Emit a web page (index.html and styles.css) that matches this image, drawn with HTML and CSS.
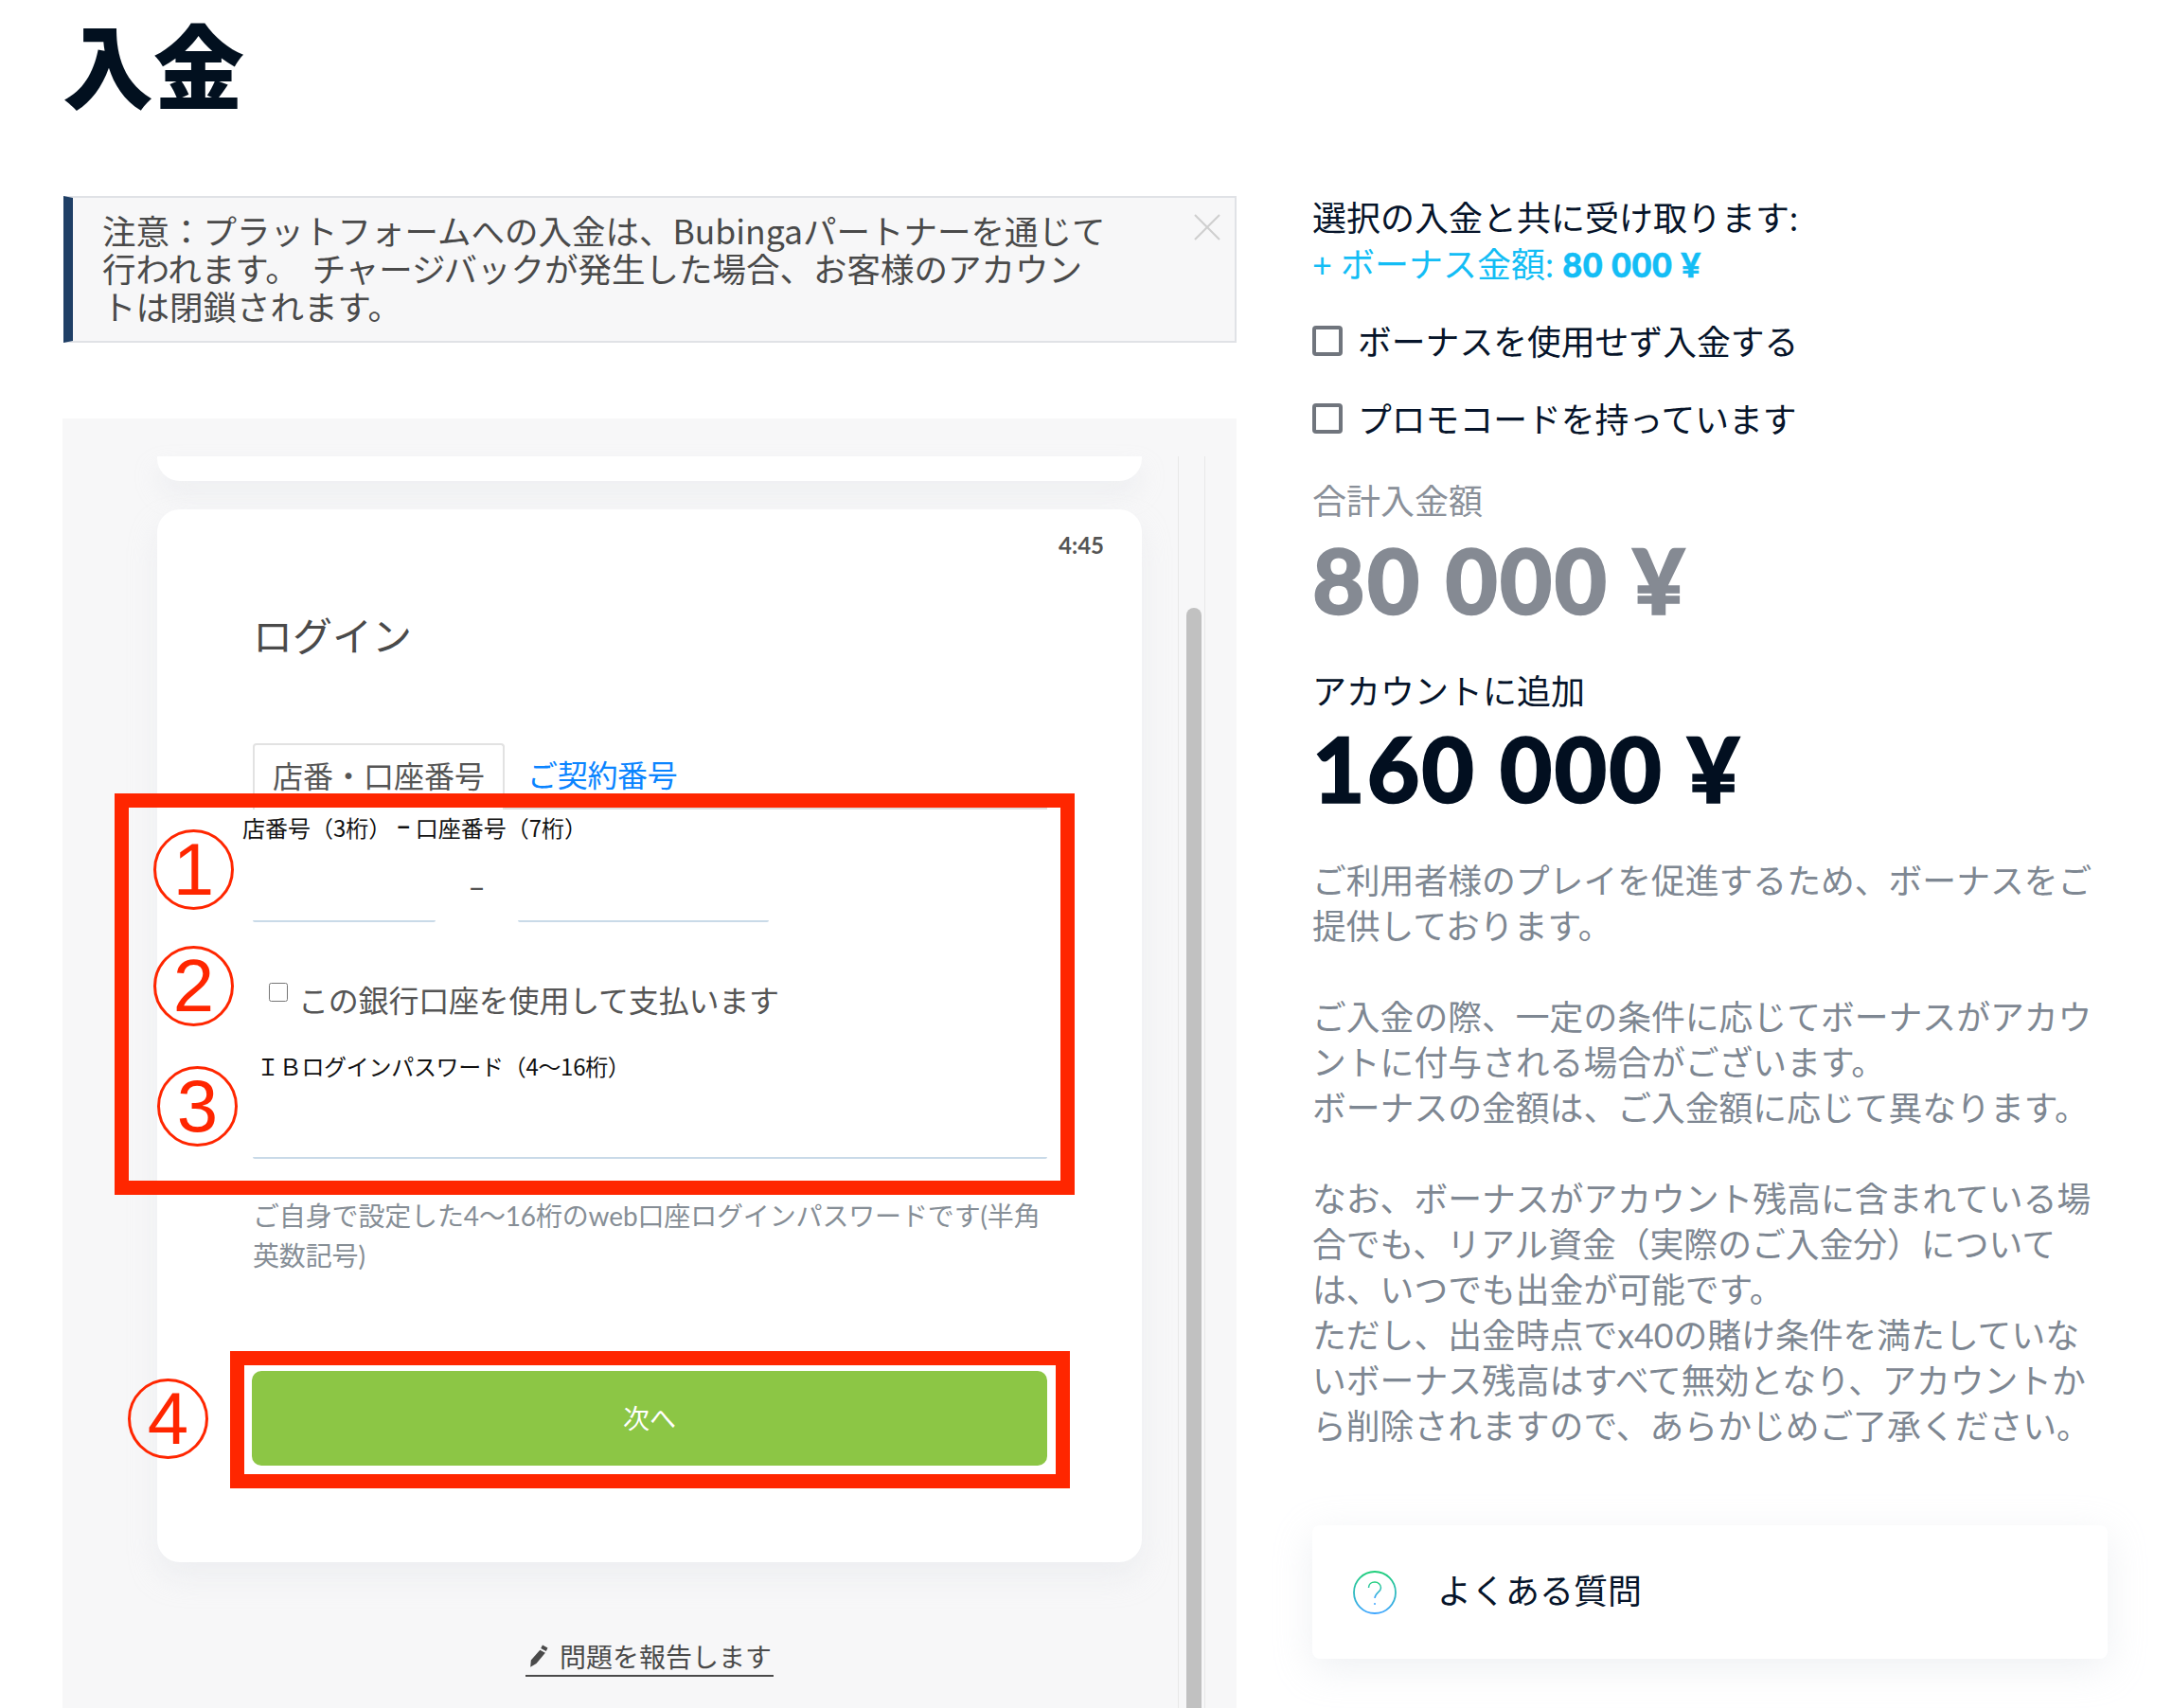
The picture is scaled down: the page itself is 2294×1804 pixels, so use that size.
FILE: index.html
```html
<!DOCTYPE html>
<html lang="ja">
<head>
<meta charset="utf-8">
<title>入金</title>
<link rel="stylesheet" href="styles.css">
</head>
<body>
<div class="page">
  <h1 class="title">入金</h1>
  <div class="columns">
    <main class="left">
      <div class="alert">
        <p class="alert-text">注意&#xFF1A;プラットフォームへの入金は、Bubingaパートナーを通じて行われます。 チャージバックが発生した場合、お客様のアカウントは閉鎖されます。</p>
        <svg class="alert-close" width="28" height="28" viewBox="0 0 28 28"><path d="M1 1L27 27M27 1L1 27" fill="none" stroke="#cfcfcf" stroke-width="2"/></svg>
      </div>
      <div class="panel">
        <div class="frame">
          <div class="scroll">
            <div class="card-stub"></div>
            <div class="card">
              <div class="time">4:45</div>
              <h2 class="login">ログイン</h2>
              <div class="tabs">
                <span class="tab tab-active">店番・口座番号</span>
                <a class="tab tab-link">ご契約番号</a>
              </div>
              <div class="field-label field-label-a">店番号&#xFF08;3桁&#xFF09;<b class="dash">ー</b> 口座番号&#xFF08;7桁&#xFF09;</div>
              <div class="inputs">
                <span class="line line-a"></span>
                <span class="sep">–</span>
                <span class="line line-b"></span>
              </div>
              <label class="remember"><input class="remember-box" type="checkbox"><span>この銀行口座を使用して支払います</span></label>
              <div class="field-label field-label-b">&#xFF29;&#xFF22;ログインパスワード&#xFF08;4〜16桁&#xFF09;</div>
              <span class="line line-full"></span>
              <p class="help">ご自身で設定した4〜16桁のweb口座ログインパスワードです(半角英数記号)</p>
              <button class="next">次へ</button>

              <div class="mark mark-box-1"></div>
              <div class="mark mark-box-2"></div>
              <div class="num num-1">1</div>
              <div class="num num-2">2</div>
              <div class="num num-3">3</div>
              <div class="num num-4">4</div>
            </div>
            <div class="report-wrap">
              <a class="report">
                <svg class="pencil" width="22" height="26" viewBox="0 0 22 26"><path d="M15 1.500L20.500 4.500 18.800 8 13.200 5ZM12.300 6.800L17.900 9.800 8.500 21 2.200 24.800 2.800 17.500Z" fill="#4a4a4a"/></svg>
                問題を報告します
              </a>
            </div>
          </div>
          <div class="scrollbar"><div class="thumb"></div></div>
        </div>
      </div>
    </main>
    <aside class="right">
      <div class="receive">選択の入金と共に受け取ります:</div>
      <div class="bonus">+ ボーナス金額: <b>80 000 ¥</b></div>
      <div class="opt opt-first"><span class="box"></span><span>ボーナスを使用せず入金する</span></div>
      <div class="opt"><span class="box"></span><span>プロモコードを持っています</span></div>
      <div class="sum-label">合計入金額</div>
      <div class="sum sum-grey">80 000 ¥</div>
      <div class="add-label">アカウントに追加</div>
      <div class="sum sum-dark">160 000 ¥</div>
      <div class="desc">
        <p>ご利用者様のプレイを促進するため、ボーナスをご提供しております。</p>
        <p>ご入金の際、一定の条件に応じてボーナスがアカウントに付与される場合がございます。<br>ボーナスの金額は、ご入金額に応じて異なります。</p>
        <p>なお、ボーナスがアカウント残高に含まれている場合でも、リアル資金&#xFF08;実際のご入金分&#xFF09;については、いつでも出金が可能です。<br>ただし、出金時点でx40の賭け条件を満たしていないボーナス残高はすべて無効となり、アカウントから削除されますので、あらかじめご了承ください。</p>
      </div>
      <div class="faq">
        <svg class="faq-icon" width="46" height="46" viewBox="0 0 46 46">
          <defs><linearGradient id="faqg" x1="0" y1="0" x2="0" y2="1"><stop offset="0" stop-color="#1fcf7a"/><stop offset="1" stop-color="#3fa6ff"/></linearGradient></defs>
          <circle cx="23" cy="23" r="22" fill="none" stroke="url(#faqg)" stroke-width="1.800"/>
          <path d="M16.500 18C16.500 14 19.500 12 23 12S29.500 14.500 29.500 18C29.500 22.500 23 23.500 23 29" fill="none" stroke="url(#faqg)" stroke-width="1.500"/>
          <circle cx="23" cy="35" r="1" fill="#3fa6ff"/>
        </svg>
        <span class="faq-text">よくある質問</span>
      </div>
    </aside>
  </div>
</div>
</body>
</html>
```
FILE: styles.css
```css
* { box-sizing: border-box; }
html, body { margin: 0; padding: 0; background: #fff; }
body { font-family: "Noto Sans CJK JP", "Noto Sans", sans-serif; }
.page { width: 2294px; height: 1804px; overflow: hidden; padding-left: 66px; }
.title { margin: 0; height: 207px; padding-top: 5px; font-family: Lato, "Noto Sans CJK JP", sans-serif; font-size: 96px; line-height: 130px; font-weight: 900; color: #02101f; }
.columns { display: flex; gap: 80px; align-items: flex-start; }
.left { width: 1240px; flex: none; }
.right { width: 840px; flex: none; font-family: Lato, "Noto Sans CJK JP", sans-serif; color: #06142a; font-size: 36px; }

.alert { height: 155px; position: relative; margin-left: 1px; background: #f7f7f8; border: 2px solid #e0e2e6; border-left: 10px solid #1f3f66; padding: 14px 134px 0 31px; margin-bottom: 80px; }
.alert-text { margin: 0; font-size: 35.500px; line-height: 40px; word-spacing: 6px; color: #4a4a4a; }
.alert-close { position: absolute; right: 15px; top: 17px; }

.panel { height: 1363px; background: #f7f7f8; padding: 40px 0 0 0; }
.frame { display: flex; height: 100%; padding-left: 100px; }
.scroll { width: 1040px; flex: none; }
.card-stub { height: 26px; background: #fff; border-radius: 0 0 24px 24px; margin-bottom: 30px; box-shadow: 0 14px 24px rgba(220, 224, 230, .35); }
.card { position: relative; height: 1112px; background: #fff; border-radius: 24px; padding: 0 100px 0 101px; box-shadow: 0 16px 30px rgba(220, 224, 230, .35); }

.time { position: absolute; right: 40px; top: 22px; font-family: Lato, sans-serif; font-size: 24px; line-height: 32px; font-weight: 700; color: #555; }
.login { margin: 0; padding-top: 102px; height: 247px; font-size: 42px; line-height: 60px; font-weight: 400; color: #4a4a4a; }
.tabs { display: flex; height: 70px; border-bottom: 2px solid #ddd; }
.tab { font-size: 32px; line-height: 62px; height: 70px; }
.tab-active { width: 266px; text-align: center; background: #fff; border: 2px solid #e2e2e2; border-bottom: 0; border-radius: 4px 4px 0 0; color: #555; }
.tab-link { margin-left: 24px; color: #0a84ff; line-height: 64px; letter-spacing: -.3px; }

.field-label { font-size: 24px; line-height: 32px; color: #111; white-space: nowrap; }
.field-label-a { margin: 3px 0 0 -11px; }
.dash { font-weight: 900; font-size: 14px; position: relative; top: -5px; margin-left: 6px; }
.inputs { display: flex; align-items: flex-end; height: 80px; }
.line { display: block; height: 2px; background: #c9dae8; border-radius: 0 0 3px 3px; }
.line-a { width: 193px; }
.line-b { width: 265px; }
.line-full { width: 839px; }
.sep { width: 87px; text-align: center; font-size: 32px; line-height: 66px; height: 66px; margin-bottom: 4px; color: #555; font-family: Lato, sans-serif; }
.remember { display: flex; align-items: flex-start; height: 120px; padding: 58px 0 0 17px; color: #555; font-size: 32px; line-height: 46px; letter-spacing: -.2px; }
.remember-box { width: 20px; height: 20px; margin: 6px 11px 0 0; flex: none; }
.field-label-b { margin: 16px 0 0 4px; height: 112px; letter-spacing: -.3px; }
.help { margin: 39px 0 0; font-family: Lato, "Noto Sans CJK JP", sans-serif; font-size: 28px; line-height: 42px; letter-spacing: -.15px; color: #868e96; width: 850px; }
.next { display: block; margin: 101px 0 0 -1px; width: 840px; height: 100px; border: 0; padding: 0 0 3px; border-radius: 10px; background: #8cc645; color: #fff; font: 400 28px "Noto Sans CJK JP", sans-serif; }

.mark { position: absolute; border: 15px solid #ff2600; background: transparent; }
.mark-box-1 { left: -45px; top: 300px; width: 1014px; height: 424px; }
.mark-box-2 { left: 77px; top: 889px; width: 887px; height: 145px; }
.num { position: absolute; width: 85px; height: 85px; border: 3px solid #ff2600; border-radius: 50%; color: #ff2600; font-family: "Liberation Sans", sans-serif; font-size: 78px; line-height: 79px; text-align: center; }
.num-1 { left: -4px; top: 338px; }
.num-2 { left: -4px; top: 461px; }
.num-3 { left: 0; top: 588px; }
.num-4 { left: -31px; top: 918px; }

.report-wrap { display: flex; justify-content: center; padding-top: 79px; }
.report { display: flex; align-items: center; gap: 11px; height: 42px; padding: 0 2px 0 3px; border-bottom: 2px solid #4a4a4a; font-size: 28px; line-height: 40px; color: #4a4a4a; }
.pencil { flex: none; }

.scrollbar { margin-left: 38px; width: 29px; height: 100%; border-left: 1px solid #e8e8e8; border-right: 1px solid #e8e8e8; padding: 160px 3px 0 8px; }
.thumb { height: 100%; background: #c1c1c1; border-radius: 8px 8px 0 0; }

.receive { line-height: 49px; margin-top: -1px; }
.bonus { color: #13bdf5; line-height: 49px; }
.bonus b { font-weight: 900; letter-spacing: .5px; -webkit-text-stroke: .5px #13bdf5; }
.opt { display: flex; align-items: center; height: 82px; font-size: 35.8px; }
.opt-first { margin-top: 14px; }
.box { width: 32px; height: 32px; border: 4px solid #70757d; border-radius: 4px; margin: 2px 16px 0 0; flex: none; }
.sum-label { color: #8a9099; line-height: 50px; margin-top: 22px; }
.sum { font-weight: 900; font-size: 96px; line-height: 110px; letter-spacing: 2px; -webkit-text-stroke: 1.500px currentColor; }
.sum-grey { color: #858a93; margin-top: 3px; }
.sum-dark { color: #020f20; }
.add-label { line-height: 52px; margin: 37px 0 0; }
.desc { margin-top: 41px; color: #7e8792; line-height: 48px; font-size: 35.8px; }
.desc p { margin: 0 0 48px; }
.faq { display: flex; align-items: center; height: 141px; margin-top: 80px; padding-left: 43px; background: #fff; border-radius: 8px; box-shadow: 0 10px 40px rgba(200, 205, 215, .3); }
.faq-icon { margin-right: 43px; flex: none; }
.faq-text { padding-bottom: 8px; }
```
